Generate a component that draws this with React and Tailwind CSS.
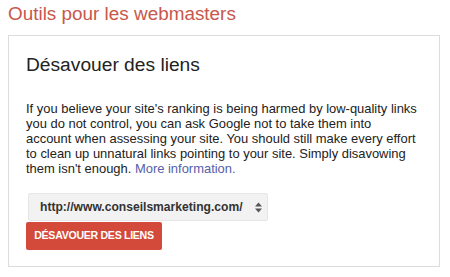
export default function App() {
  return (
    <div className="w-[450px] h-[277px] bg-white px-2 pt-[1.5px]" style={{ fontFamily: '"Liberation Sans", Arial, sans-serif' }}>
      <h1 className="text-[18.9px] leading-[24px] text-[#c8574b]">Outils pour les webmasters</h1>
      <div className="mt-[9.5px] w-[432px] h-[232px] border border-[#dcdcdc] pl-[17px] pt-[16px]">
        <h2 className="text-[19.2px] leading-[26px] text-[#222]">Désavouer des liens</h2>
        <p className="mt-[23px] whitespace-nowrap text-[12.95px] leading-[15px] text-[#222]">
          If you believe your site's ranking is being harmed by low-quality links
          <br />
          you do not control, you can ask Google not to take them into
          <br />
          account when assessing your site. You should still make every effort
          <br />
          to clean up unnatural links pointing to your site. Simply disavowing
          <br />
          them isn't enough. <a className="text-[#5561a8]">More information.</a>
        </p>
        <div className="mt-[17px] ml-[2px] flex h-[28px] w-[240px] items-center justify-between rounded-[2px] border border-[#e6e6e6] bg-[#f2f2f2] pl-[11px] pr-[4px]">
          <span className="text-[12.1px] font-bold text-[#333]">http://www.conseilsmarketing.com/</span>
          <svg width="9" height="11" viewBox="0 0 9 11">
            <path d="M4.5 0.5 L8 4.5 H1 Z M4.5 10.5 L8 6.5 H1 Z" fill="#555" />
          </svg>
        </div>
        <button className="mt-[1px] flex h-[28px] w-[136px] items-center justify-center rounded-[2px] bg-[#d44a3a] text-[10.6px] font-bold uppercase tracking-[-0.3px] text-white">
          Désavouer des liens
        </button>
      </div>
    </div>
  );
}
